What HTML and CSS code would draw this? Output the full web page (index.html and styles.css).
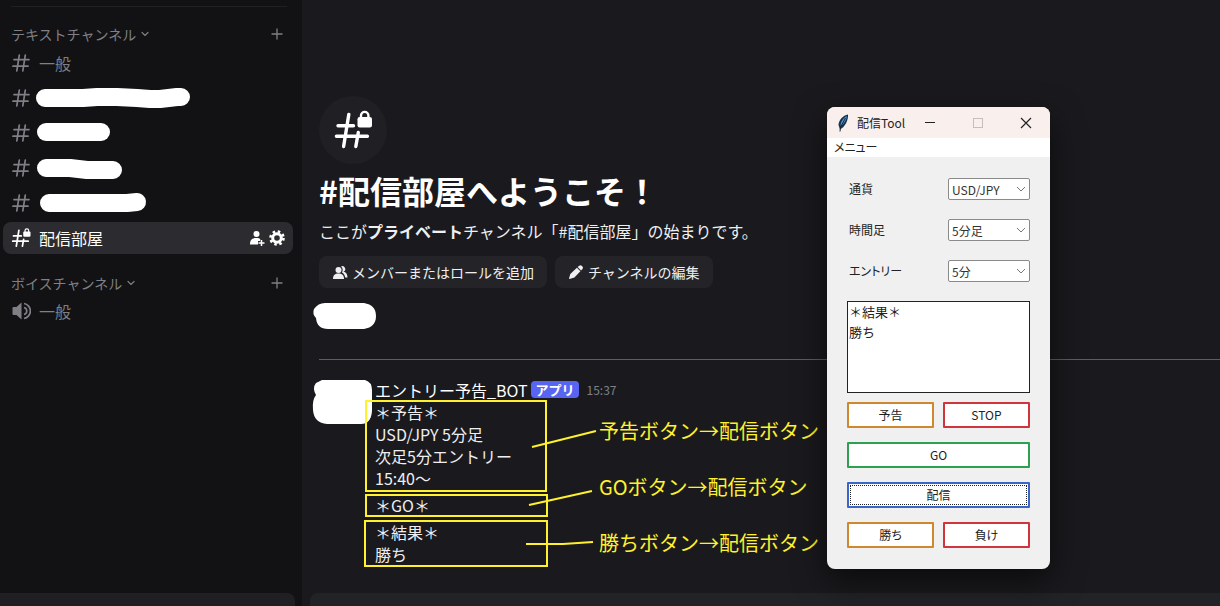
FILE: index.html
```
<!DOCTYPE html>
<html lang="ja">
<head>
<meta charset="UTF-8">
<meta name="viewport" content="width=device-width, initial-scale=1.0">
<title>配信部屋</title>
<link rel="stylesheet" href="styles.css">
</head>
<body>

<!-- Shared icons -->
<svg class="sprite" aria-hidden="true">
  <symbol id="hash" viewBox="0 0 20 20">
    <path d="M8.3 2.2 5.8 17.8M14.3 2.2 11.8 17.8M3 6.6h15M2 13.2h15" fill="none" stroke="currentColor" stroke-width="1.7" stroke-linecap="round"/>
  </symbol>
  <symbol id="hash-lock" viewBox="0 0 40 40">
    <path d="M15.8 4.5 10.6 36.5M25.3 22.5 22.8 36.5M5 15.8h15.5M3.4 26.3h31" fill="none" stroke="currentColor" stroke-width="3.4" stroke-linecap="round"/>
    <rect x="24.5" y="7" width="14.5" height="10.5" rx="2.2" fill="currentColor"/>
    <path d="M28 8V5.6a3.7 3.7 0 0 1 7.4 0V8" fill="none" stroke="currentColor" stroke-width="2.4"/>
  </symbol>
  <symbol id="chevron" viewBox="0 0 10 10">
    <path d="M2 3.5 5 6.5 8 3.5" fill="none" stroke="currentColor" stroke-width="1.2" stroke-linecap="round"/>
  </symbol>
  <symbol id="plus" viewBox="0 0 12 12">
    <path d="M6 1v10M1 6h10" fill="none" stroke="currentColor" stroke-width="1.3" stroke-linecap="round"/>
  </symbol>
</svg>

<nav class="sidebar">
  <div class="channels">
    <div class="category">
      <button class="category-name">テキストチャンネル <svg width="10" height="10"><use href="#chevron"/></svg></button>
      <button class="icon-button" aria-label="チャンネルを作成"><svg width="12" height="12"><use href="#plus"/></svg></button>
    </div>
    <a class="channel" href="#"><svg width="20" height="20"><use href="#hash"/></svg>一般</a>
    <a class="channel masked" href="#"><svg width="20" height="20"><use href="#hash"/></svg>
      <svg class="mask" width="162" height="24"><path d="M14 12H52L66 11H86L106 12 119 13H129L146 11H150"/></svg></a>
    <a class="channel masked" href="#"><svg width="20" height="20"><use href="#hash"/></svg>
      <svg class="mask" width="162" height="24"><path d="M15 11H70"/></svg></a>
    <a class="channel masked" href="#"><svg width="20" height="20"><use href="#hash"/></svg>
      <svg class="mask" width="162" height="24"><path d="M15 12H39L56 14H82"/></svg></a>
    <a class="channel masked" href="#"><svg width="20" height="20"><use href="#hash"/></svg>
      <svg class="mask" width="162" height="24"><path d="M18 12H96L106 11"/></svg></a>
    <div class="channel selected">
      <svg width="20" height="20"><use href="#hash-lock"/></svg>
      <a href="#">配信部屋</a>
      <button class="icon-button" aria-label="招待">
        <svg width="16" height="16" viewBox="0 0 16 16" fill="currentColor"><circle cx="7.5" cy="4" r="3"/><path d="M1 14.5C1 9.500 3.500 8 7.500 8c1.700 0 2.800.300 3.700 1v2H9v3.500z"/><path d="M12.500 10v6M9.500 13h6" fill="none" stroke="currentColor" stroke-width="1.500"/></svg>
      </button>
      <button class="icon-button" aria-label="設定">
        <svg width="16" height="16" viewBox="0 0 16 16"><circle cx="8" cy="8" r="4.300" fill="none" stroke="currentColor" stroke-width="3"/><circle cx="8" cy="8" r="6.500" fill="none" stroke="currentColor" stroke-width="2.600" stroke-dasharray="2.500 2.600"/></svg>
      </button>
    </div>
    <div class="category voice">
      <button class="category-name">ボイスチャンネル <svg width="10" height="10"><use href="#chevron"/></svg></button>
      <button class="icon-button" aria-label="チャンネルを作成"><svg width="12" height="12"><use href="#plus"/></svg></button>
    </div>
    <a class="channel" href="#">
      <svg width="20" height="20" viewBox="0 0 20 20"><path d="M10.500 1.500v17L5.500 14H2.500q-1 0-1-1V7q0-1 1-1h3z" fill="currentColor"/><path d="M13 6.500a3.600 3.600 0 0 1 0 7M13 2.500a7.600 7.600 0 0 1 0 15" fill="none" stroke="currentColor" stroke-width="1.700"/></svg>一般</a>
  </div>
  <div class="user-panel"></div>
</nav>

<main class="chat">
  <section class="welcome">
    <div class="badge"><svg width="40" height="40"><use href="#hash-lock"/></svg></div>
    <h1>#配信部屋へようこそ！</h1>
    <p>ここが<strong>プライベート</strong>チャンネル「#配信部屋」の始まりです。</p>
    <div class="actions">
      <button>
        <svg width="16" height="16" viewBox="0 0 16 16" fill="currentColor"><circle cx="6.500" cy="6" r="3"/><path d="M1 15c0-4 2-5.500 5.500-5.500S12 11 12 15z"/><path d="M9 2.500a2.800 2.800 0 1 1 2.500 5C14 8.500 15.500 10 15.500 13.500h-2.300c-.400-2.500-1.500-4-3.200-5C11 6.500 11 4 9 2.500z"/></svg>
        メンバーまたはロールを追加
      </button>
      <button>
        <svg width="16" height="16" viewBox="0 0 16 16" fill="currentColor"><path d="M11.300 1.700q1.200-1 2.300 0l.900.900q1 1.200 0 2.300L13 6.500 9.600 3.100zM8.900 3.700l3.500 3.500-6 6.400L1.500 15l-.500-.500L2.300 9.900z"/></svg>
        チャンネルの編集
      </button>
    </div>
  </section>

  <svg class="author-mask" width="66" height="28" viewBox="0 0 66 28"><path d="M13 1H52Q64 3 64 14T52 27H16Q5 27 4 16 0 12 2 7 6 1 13 1z"/></svg>
  <div class="unread" role="separator"></div>

  <section class="messages">
    <svg class="avatar-mask" width="64" height="48" viewBox="0 0 64 48"><path d="M11 2H54Q61 4 61 12V33Q60 46 50 46H16Q3 45 2 32 1 22 5 17 1 10 5 5z"/></svg>
    <div>
      <header>
        <span class="author">エントリー予告_BOT</span>
        <span class="tag">アプリ</span>
        <time>15:37</time>
      </header>
      <p>＊予告＊<br>USD/JPY 5分足<br>次足5分エントリー<br>15:40～</p>
      <p>＊GO＊</p>
      <p>＊結果＊<br>勝ち</p>
    </div>

    <!-- Yellow notes drawn over the messages -->
    <div class="notes">
      <svg width="240" height="176" viewBox="0 0 240 176">
        <rect x="3" y="6" width="180" height="90"/>
        <rect x="3" y="100" width="181" height="21"/>
        <rect x="2" y="126" width="182" height="45"/>
        <path d="M169 52 233 36M166 110 229 96M163 149H200L230 147"/>
      </svg>
      <ul>
        <li>予告ボタン→配信ボタン</li>
        <li>GOボタン→配信ボタン</li>
        <li>勝ちボタン→配信ボタン</li>
      </ul>
    </div>
  </section>
  <div class="composer"></div>
</main>

<!-- Tool window -->
<div class="window">
  <div class="titlebar">
    <svg width="14" height="18" viewBox="0 0 14 18"><path d="M12 .5C7 1.500 2.500 6 2.500 11L4 15.500C9 13 12.500 6 12 .5z" fill="#17344f"/><path d="M10.800 2C7.500 4 4.800 7 4.500 12 8.500 9.500 10.500 6 10.800 2z" fill="#5b96cf"/><path d="M9.500 4 4.500 13 4 17.500" fill="none" stroke="#152533" stroke-width="1"/></svg>
    <span>配信Tool</span>
    <button aria-label="最小化"><svg width="12" height="12" viewBox="0 0 12 12"><path d="M1 5.500h10" stroke="#222"/></svg></button>
    <button aria-label="最大化" disabled><svg width="12" height="12" viewBox="0 0 12 12"><rect x="1.500" y="1.500" width="9" height="9" fill="none" stroke="#c5bebd"/></svg></button>
    <button aria-label="閉じる"><svg width="12" height="12" viewBox="0 0 12 12"><path d="M1 1 11 11M11 1 1 11" stroke="#222" stroke-width="1.200"/></svg></button>
  </div>
  <div class="menubar"><button>メニュー</button></div>
  <form class="tool">
    <div class="field">
      <label for="currency">通貨</label>
      <select id="currency"><option>USD/JPY</option></select>
    </div>
    <div class="field">
      <label for="timeframe">時間足</label>
      <select id="timeframe"><option>5分足</option></select>
    </div>
    <div class="field">
      <label for="entry">エントリー</label>
      <select id="entry"><option>5分</option></select>
    </div>
    <textarea aria-label="メッセージ">＊結果＊
勝ち</textarea>
    <div class="buttons">
      <button type="button" class="orange">予告</button>
      <button type="button" class="red">STOP</button>
      <button type="button" class="green wide">GO</button>
      <button type="button" class="blue wide">配信</button>
      <button type="button" class="orange">勝ち</button>
      <button type="button" class="red">負け</button>
    </div>
  </form>
</div>

</body>
</html>
```
FILE: styles.css
```
* {
  box-sizing: border-box;
}
body {
  margin: 0;
  display: flex;
  height: 100vh;
  overflow: hidden;
  background-color: #1a1a1e;
  color: #efeff1;
  font-family: "Noto Sans CJK JP", sans-serif;
  font-size: 16px;
}
button {
  padding: 0;
  border: none;
  background: none;
  color: inherit;
  font: inherit;
  cursor: pointer;
}
a {
  color: inherit;
  text-decoration: none;
}
svg {
  display: block;
  flex: none;
}
.sprite {
  position: absolute;
  width: 0;
  height: 0;
}

/* Sidebar */
.sidebar {
  flex: none;
  width: 302px;
  padding-top: 6px;
  display: flex;
  flex-direction: column;
  background-color: #121214;
  color: #7f8086;
}
.channels {
  display: flex;
  flex-direction: column;
  gap: 3px;
  padding: 0 9px 0 3px;
}
.category {
  display: flex;
  align-items: center;
  justify-content: space-between;
  height: 38px;
  margin: 0 6px 0 8px;
  padding: 16px 4px 0 0;
  border-top: 1px solid #202023;
  font-size: 14px;
}
.category.voice {
  height: 35px;
  border-top: none;
}
.category-name {
  display: flex;
  align-items: center;
  gap: 4px;
}
.icon-button {
  display: flex;
}
.channel {
  display: flex;
  align-items: center;
  gap: 8px;
  height: 32px;
  padding: 0 8px;
  border-radius: 8px;
}
.channel.masked {
  gap: 0;
}
.mask path {
  fill: none;
  stroke: #fff;
  stroke-width: 18px;
  stroke-linecap: round;
  stroke-linejoin: round;
}
.channel.selected {
  gap: 4px;
  background-color: #2c2c30;
  color: #fff;
}
.selected a {
  flex: 1;
  padding-left: 4px;
}
.user-panel {
  height: 13px;
  margin: auto 7px 0 0;
  border-radius: 0 8px 0 0;
  background-color: #202024;
}

/* Chat */
.chat {
  flex: 1;
  min-width: 0;
  display: flex;
  flex-direction: column;
  padding-top: 96px;
}
.welcome {
  padding-left: 17px;
}
.badge {
  display: flex;
  align-items: center;
  justify-content: center;
  width: 68px;
  height: 68px;
  border-radius: 50%;
  background-color: #202024;
  color: #fff;
}
h1 {
  margin: 6px 0 10px;
  font-size: 32px;
  line-height: 40px;
  color: #fff;
}
.welcome p {
  margin: 0;
  line-height: 22px;
}
.actions {
  display: flex;
  gap: 8px;
  margin-top: 14px;
}
.actions button {
  display: flex;
  align-items: center;
  gap: 4px;
  height: 32px;
  padding: 0 13px;
  border-radius: 8px;
  background-color: #242428;
  font-size: 14px;
}
.author-mask {
  margin: 14px 0 0 10px;
  fill: #fff;
}
.unread {
  flex: none;
  height: 1px;
  margin: 29px 0 18px 17px;
  background-color: #b5383e;
}
.messages {
  position: relative;
  display: flex;
  padding-left: 9px;
}
.avatar-mask {
  fill: #fff;
}
.messages header {
  display: flex;
  align-items: center;
  gap: 4px;
  height: 23px;
}
.author {
  color: #fff;
}
.tag {
  padding: 0 4px;
  border-radius: 4px;
  background-color: #5865f2;
  color: #fff;
  font-size: 13px;
  font-weight: bold;
  line-height: 17px;
}
time {
  margin-left: 4px;
  color: #7f8086;
  font-size: 12px;
}
.messages p {
  margin: 0 0 5px;
  line-height: 22px;
}
.composer {
  height: 13px;
  margin: auto 0 0 8px;
  border-radius: 8px 0 0 0;
  background-color: #222327;
}

/* Notes over the messages */
.notes {
  position: absolute;
  top: 17px;
  left: 61px;
  display: flex;
}
.notes svg {
  fill: none;
  stroke: #fff22d;
  stroke-width: 2px;
}
.notes ul {
  margin: 22px 0 0 -4px;
  padding: 0;
  list-style: none;
  color: #fff22d;
  font-size: 20px;
  line-height: 28px;
  white-space: nowrap;
}
.notes li {
  margin-bottom: 28px;
}

/* Tool window */
.window {
  position: absolute;
  top: 107px;
  left: 827px;
  width: 223px;
  border-radius: 8px;
  overflow: hidden;
  background-color: #f0f0f0;
  color: #222;
  font-size: 12px;
  font-feature-settings: "palt";
  box-shadow: 0 12px 32px rgba(0, 0, 0, 0.6);
}
.titlebar {
  display: flex;
  align-items: center;
  height: 31px;
  padding: 0 18px 0 9px;
  background-color: #f9f0ee;
}
.titlebar span {
  flex: 1;
  padding-left: 7px;
}
.titlebar button {
  margin-left: 36px;
}
.titlebar button:first-of-type {
  margin-left: 0;
}
.menubar {
  height: 19px;
  padding-left: 7px;
  background-color: #fff;
  line-height: 18px;
}
.tool {
  padding: 21px 20px;
}
.field {
  display: flex;
  align-items: center;
  justify-content: space-between;
  height: 22px;
  margin-bottom: 19px;
  padding-left: 2px;
}
.field label {
  padding-bottom: 2px;
}
select {
  appearance: none;
  width: 82px;
  height: 22px;
  padding: 0 3px;
  border: 1px solid #8a8a8a;
  border-radius: 2px;
  background: #fff url("data:image/svg+xml,%3Csvg xmlns='http://www.w3.org/2000/svg' width='10' height='6'%3E%3Cpath d='M1 1l4 4 4-4' fill='none' stroke='%23777'/%3E%3C/svg%3E") no-repeat right 3px center;
  color: #333;
  font: inherit;
  font-feature-settings: inherit;
}
textarea {
  display: block;
  width: 100%;
  height: 92px;
  padding: 0 1px;
  border: 1px solid #222;
  background-color: #fff;
  color: #222;
  font-family: inherit;
  font-size: 13px;
  line-height: 20px;
  resize: none;
}
.buttons {
  display: grid;
  grid-template-columns: 1fr 1fr;
  gap: 14px 9px;
  margin-top: 9px;
}
.buttons button {
  height: 26px;
  border: 2px solid;
  border-radius: 1px;
  background-color: #fff;
  line-height: 20px;
}
.buttons .wide {
  grid-column: span 2;
}
.buttons .orange {
  border-color: #cf8730;
}
.buttons .red {
  border-color: #d0353d;
}
.buttons .green {
  border-color: #2fa052;
}
.buttons .blue {
  border-color: #3a66cc;
  outline: 1px dotted #222;
  outline-offset: -4px;
}
```
